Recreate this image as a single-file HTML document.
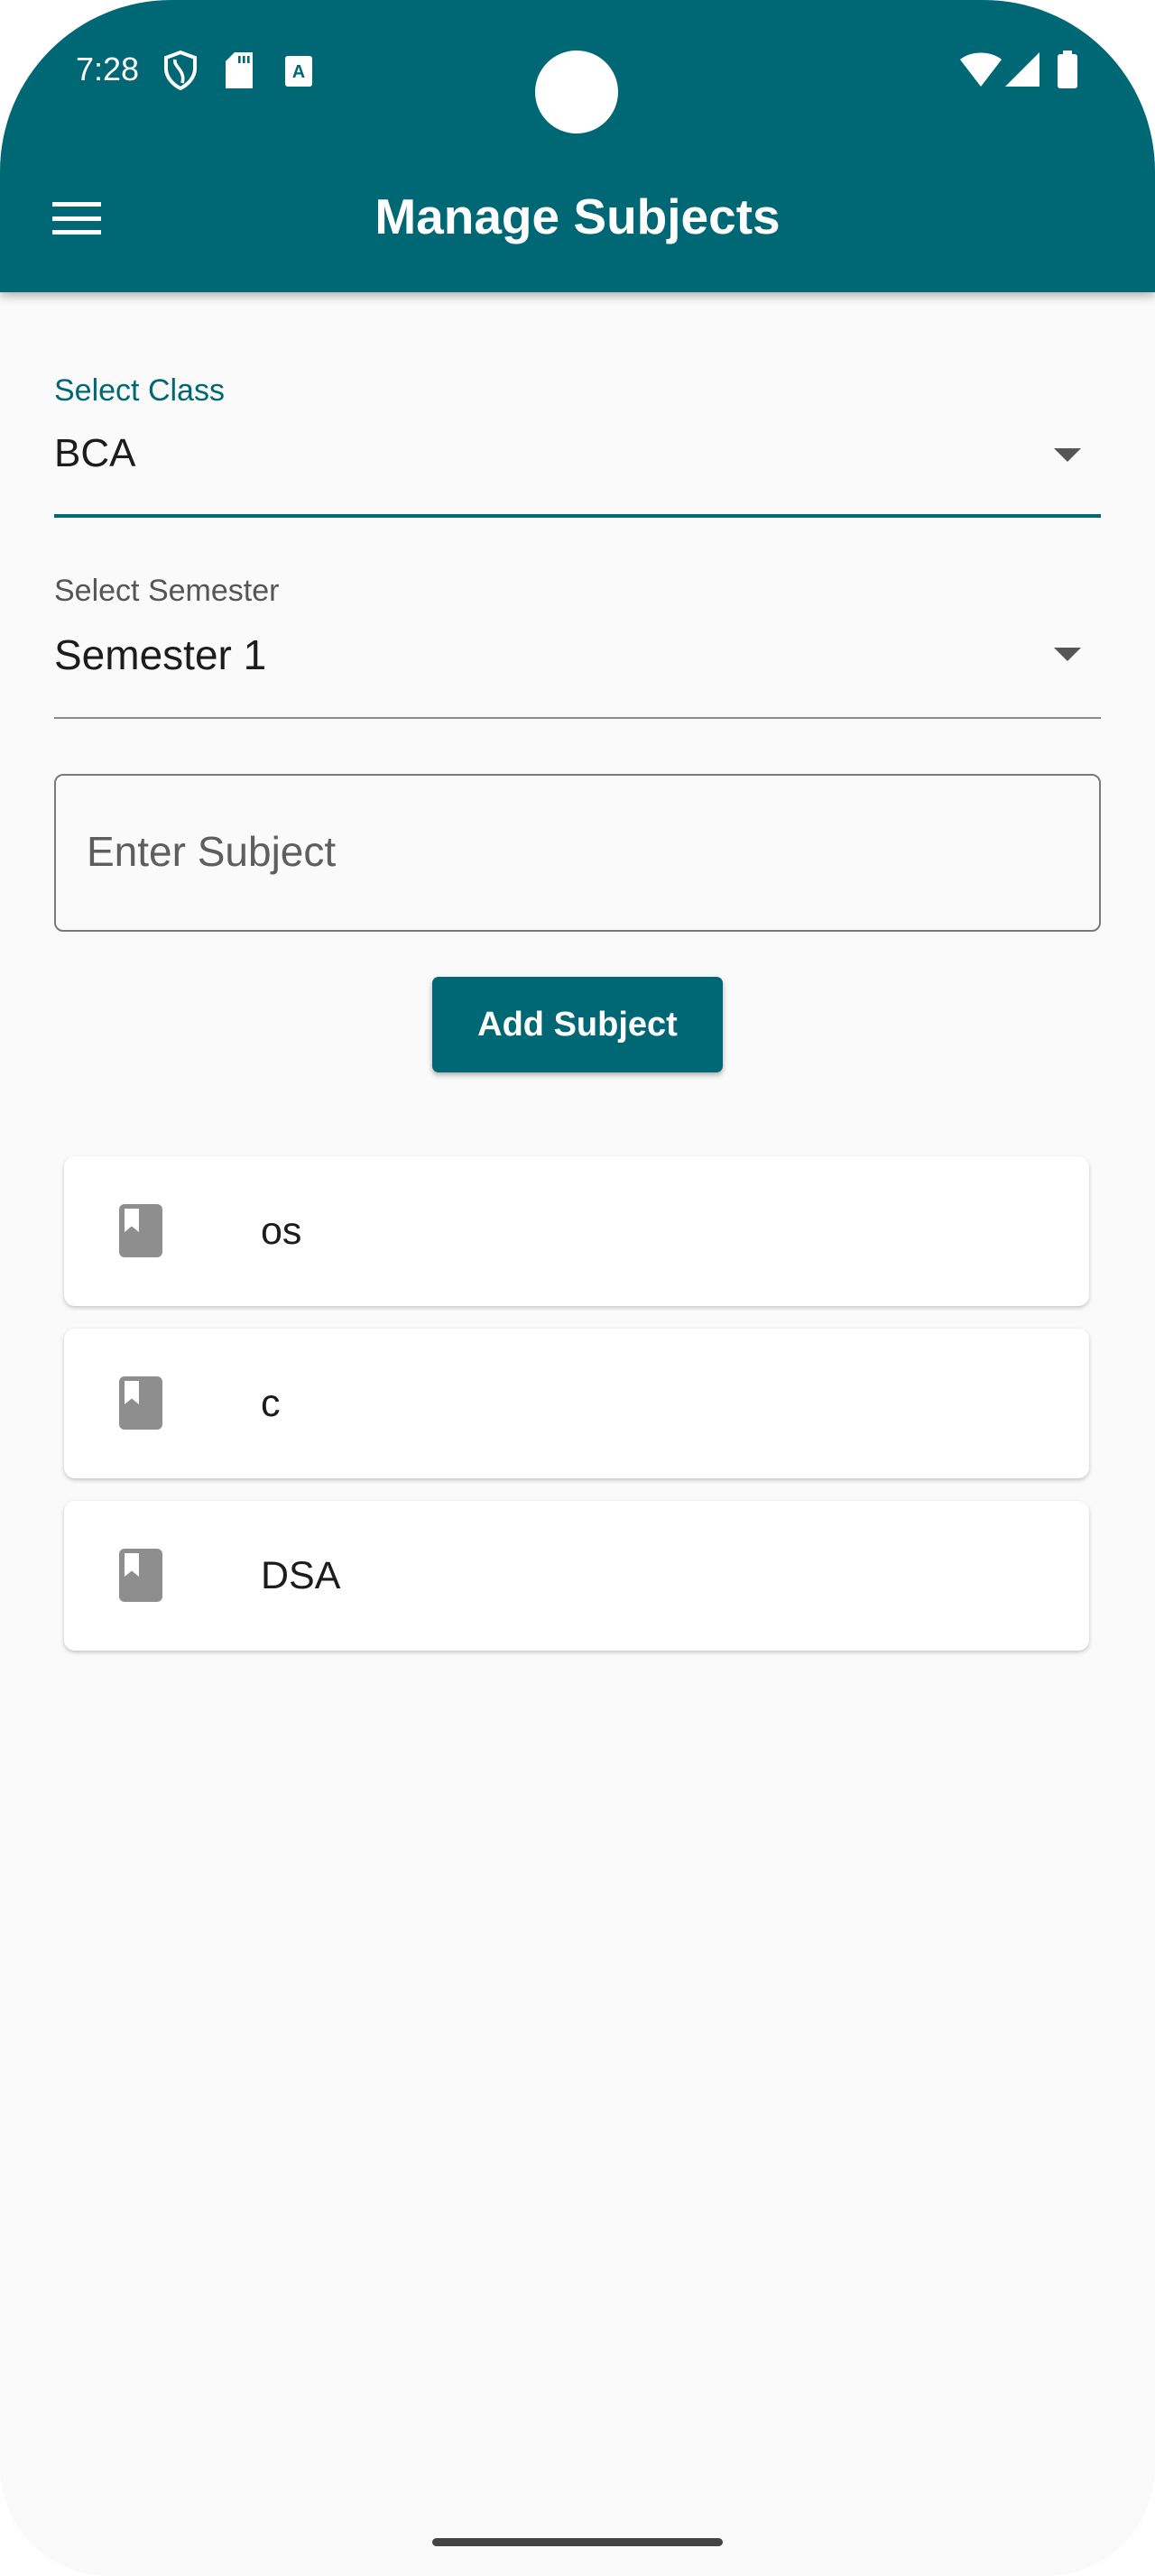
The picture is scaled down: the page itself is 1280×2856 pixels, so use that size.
<!DOCTYPE html>
<html><head><meta charset="utf-8"><style>
*{margin:0;padding:0;box-sizing:border-box}
html,body{width:1280px;height:2856px;background:#fff;overflow:hidden;font-family:"Liberation Sans",Roboto,sans-serif}
.phone{position:absolute;left:0;top:0;width:1280px;height:2856px;background:#fafafa;border-radius:190px 190px 120px 120px;overflow:hidden}
.bar{position:absolute;left:0;top:0;width:1280px;height:324px;background:#006874;box-shadow:0 4px 10px rgba(0,0,0,.3)}
.abs{position:absolute}
.lbl{position:absolute;left:60px;font-size:34px}
.val{position:absolute;left:60px;font-size:44px;color:#1c1c1c}
.tri{position:absolute;width:0;height:0;border-left:15px solid transparent;border-right:15px solid transparent;border-top:15px solid #555}
.card{position:absolute;left:71px;width:1136px;height:166px;background:#fff;border-radius:12px;box-shadow:0 2px 5px rgba(0,0,0,.22)}
.card .ic{position:absolute;left:61px;top:53px;width:48px;height:59px;background:#8e8e8e;border-radius:6px}
.card .ic:after{content:"";position:absolute;left:6px;top:5px;width:16px;height:26px;background:#fff;clip-path:polygon(0 0,100% 0,100% 100%,50% 75%,0 100%)}
.card .t{position:absolute;left:218px;top:0;line-height:166px;font-size:43px;color:#1c1c1c}
</style></head><body>
<div class="phone">
<div class="bar">
  <div class="abs" style="left:84px;top:56px;color:#fff;font-size:36px">7:28</div>
  <svg class="abs" style="left:180px;top:56px" width="40" height="44" viewBox="0 0 20 22"><path d="M10 1 L18 4 V10 C18 15 14 19 10 21 C6 19 2 15 2 10 V4 Z" fill="none" stroke="#fff" stroke-width="2"/><path d="M7 5 C6 9 13 11 11 18" fill="none" stroke="#fff" stroke-width="1.8"/></svg>
  <svg class="abs" style="left:250px;top:58px" width="30" height="40" viewBox="0 0 15 20"><path d="M5 0 H15 V20 H0 V5 Z" fill="#fff"/><rect x="7" y="2" width="1.3" height="4" fill="#006874"/><rect x="9.5" y="2" width="1.3" height="4" fill="#006874"/><rect x="12" y="2" width="1.3" height="4" fill="#006874"/></svg>
  <svg class="abs" style="left:316px;top:62px" width="30" height="34" viewBox="0 0 15 17"><rect width="15" height="17" rx="1.5" fill="#fff"/><text x="7.5" y="12" font-size="10" font-family="Liberation Sans" font-weight="bold" text-anchor="middle" fill="#006874">A</text></svg>
  <div class="abs" style="left:593px;top:56px;width:92px;height:92px;border-radius:50%;background:#fff"></div>
  <svg class="abs" style="left:1064px;top:58px" width="46" height="38" viewBox="0 0 23 19"><path d="M0 4 C6 -1 17 -1 23 4 L11.5 19 Z" fill="#fff"/></svg>
  <svg class="abs" style="left:1114px;top:58px" width="38" height="38" viewBox="0 0 19 19"><path d="M19 0 V19 H0 Z" fill="#fff"/></svg>
  <svg class="abs" style="left:1172px;top:56px" width="22" height="42" viewBox="0 0 11 21"><rect x="3" y="0" width="5" height="3" fill="#fff"/><rect x="0" y="2" width="11" height="19" rx="1.5" fill="#fff"/></svg>
  <div class="abs" style="left:58px;top:224px;width:54px;height:5px;background:#fff"></div>
  <div class="abs" style="left:58px;top:240px;width:54px;height:5px;background:#fff"></div>
  <div class="abs" style="left:58px;top:255px;width:54px;height:5px;background:#fff"></div>
  <div class="abs" style="left:0;width:1280px;top:208px;text-align:center;color:#fff;font-size:55px;font-weight:bold">Manage Subjects</div>
</div>

<div class="lbl" style="top:414px;color:#006874">Select Class</div>
<div class="val" style="top:478px">BCA</div>
<div class="tri" style="left:1168px;top:497px"></div>
<div class="abs" style="left:60px;top:570px;width:1160px;height:4px;background:#006874"></div>

<div class="lbl" style="top:636px;color:#555">Select Semester</div>
<div class="val" style="top:699px;font-size:46px">Semester 1</div>
<div class="tri" style="left:1168px;top:718px"></div>
<div class="abs" style="left:60px;top:795px;width:1160px;height:2px;background:#8a8a8a"></div>

<div class="abs" style="left:60px;top:858px;width:1160px;height:175px;border:2px solid #7a7a7a;border-radius:10px"></div>
<div class="abs" style="left:96px;top:917px;font-size:46px;color:#5e5e5e">Enter Subject</div>

<div class="abs" style="left:479px;top:1083px;width:322px;height:106px;background:#006874;border-radius:7px;box-shadow:0 3px 6px rgba(0,0,0,.3);color:#fff;font-size:38px;font-weight:bold;text-align:center;line-height:106px">Add Subject</div>

<div class="card" style="top:1282px"><div class="ic"></div><div class="t">os</div></div>
<div class="card" style="top:1473px"><div class="ic"></div><div class="t">c</div></div>
<div class="card" style="top:1664px"><div class="ic"></div><div class="t">DSA</div></div>

<div class="abs" style="left:479px;top:2814px;width:322px;height:9px;border-radius:5px;background:#444"></div>
</div>
</body></html>
